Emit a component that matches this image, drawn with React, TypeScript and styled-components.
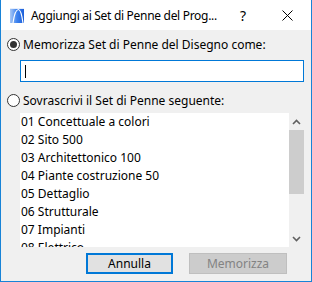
import React from "react";
import styled, { createGlobalStyle } from "styled-components";

const Global = createGlobalStyle`
  html, body { margin: 0; padding: 0; background: #f0f0f0; }
  * { box-sizing: border-box; }
`;

const FONT = `"Noto Sans", "Open Sans", sans-serif`;

const Window = styled.div`
  width: 312px;
  height: 282px;
  border: 1px solid #1883d7;
  border-top: none;
  display: flex;
  flex-direction: column;
  font-family: ${FONT};
  font-size: 12px;
  color: #000;
  overflow: hidden;
`;

const TitleBar = styled.div`
  height: 30px;
  flex: none;
  background: #fff;
  display: flex;
  align-items: center;
  padding-left: 9px;
`;

const TitleText = styled.span`
  margin-left: 7px;
  font-size: 12px;
  letter-spacing: -0.3px;
  color: #000;
  white-space: nowrap;
  flex: 1;
`;

const TitleButton = styled.div<{ $w: number }>`
  width: ${(p) => p.$w}px;
  height: 30px;
  display: flex;
  align-items: center;
  justify-content: center;
  font-size: 14px;
`;

const Body = styled.div`
  flex: 1;
  background: #f0f0f0;
  padding: 5px 7px 0 5px;
  display: flex;
  flex-direction: column;
`;

const RadioRow = styled.label`
  display: flex;
  align-items: center;
  height: 18px;
  gap: 3px;
  white-space: nowrap;
`;

const RadioCircle = styled.span<{ $checked?: boolean }>`
  width: 13px;
  height: 13px;
  border-radius: 50%;
  border: 1px solid #333;
  background: #fff;
  display: inline-flex;
  align-items: center;
  justify-content: center;
  flex: none;
  margin-left: 1px;
  &::after {
    content: "";
    width: 7px;
    height: 7px;
    border-radius: 50%;
    background: #333;
    display: ${(p) => (p.$checked ? "block" : "none")};
  }
`;

const Input = styled.div`
  margin: 7px 0 0 14px;
  height: 22px;
  border: 1px solid #0078d7;
  background: #fff;
  display: flex;
  align-items: center;
  padding-left: 4px;
`;

const Caret = styled.span`
  width: 1px;
  height: 13px;
  background: #000;
`;

const Spacer = styled.div<{ $h: number }>`
  height: ${(p) => p.$h}px;
  flex: none;
`;

const ListBox = styled.div`
  margin-left: 14px;
  height: 134px;
  display: flex;
  background: #fff;
  overflow: hidden;
`;

const ListItems = styled.div`
  flex: 1;
  overflow: hidden;
  padding-left: 1px;
`;

const ListItem = styled.div`
  height: 18px;
  line-height: 18px;
  white-space: nowrap;
`;

const ScrollBar = styled.div`
  width: 15px;
  background: #f0f0f0;
  display: flex;
  flex-direction: column;
  align-items: stretch;
`;

const ScrollArrow = styled.div`
  height: 17px;
  display: flex;
  align-items: center;
  justify-content: center;
`;

const Thumb = styled.div`
  height: 64px;
  background: #cdcdcd;
`;

const ScrollFill = styled.div`
  flex: 1;
`;

const Buttons = styled.div`
  display: flex;
  justify-content: flex-end;
  gap: 16px;
  margin-top: 6px;
  padding-right: 17px;
`;

const Button = styled.div<{ $default?: boolean; $disabled?: boolean }>`
  height: 21px;
  width: ${(p) => (p.$default ? 87 : 98)}px;
  display: flex;
  align-items: center;
  justify-content: center;
  background: ${(p) => (p.$disabled ? "#cccccc" : "#e1e1e1")};
  border: ${(p) =>
    p.$default ? "2px solid #0078d7" : p.$disabled ? "1px solid #bfbfbf" : "1px solid #adadad"};
  color: ${(p) => (p.$disabled ? "#838383" : "#000")};
`;

const items = [
  "01 Concettuale a colori",
  "02 Sito 500",
  "03 Architettonico 100",
  "04 Piante costruzione 50",
  "05 Dettaglio",
  "06 Strutturale",
  "07 Impianti",
  "08 Elettrico",
];

const AppIcon = () => (
  <svg width="14" height="15" viewBox="0 0 14 15">
    <defs>
      <linearGradient id="g" x1="0" y1="0" x2="1" y2="0">
        <stop offset="0" stopColor="#a9c8f5" />
        <stop offset="0.5" stopColor="#3c82ef" />
        <stop offset="1" stopColor="#1d5fd8" />
      </linearGradient>
    </defs>
    <rect x="0" y="0" width="14" height="15" fill="url(#g)" />
    <path d="M3 15 C4 8 6 1.5 8.5 1.5 C11 1.5 12 8 13 15" fill="none" stroke="#fff" strokeWidth="1.2" />
    <rect x="0" y="0" width="14" height="1" fill="#e6eefc" />
  </svg>
);

const Chevron = ({ up }: { up?: boolean }) => (
  <svg width="9" height="6" viewBox="0 0 9 6">
    <path
      d={up ? "M1 5 L4.5 1.5 L8 5" : "M1 1 L4.5 4.5 L8 1"}
      fill="none"
      stroke="#606060"
      strokeWidth="1.6"
    />
  </svg>
);

export default function App() {
  return (
    <>
      <Global />
      <Window>
        <TitleBar>
          <AppIcon />
          <TitleText>Aggiungi ai Set di Penne del Prog...</TitleText>
          <TitleButton $w={40}>?</TitleButton>
          <TitleButton $w={48}>
            <svg width="11" height="11" viewBox="0 0 11 11">
              <path d="M0.5 0.5 L10.5 10.5 M10.5 0.5 L0.5 10.5" stroke="#000" strokeWidth="1" />
            </svg>
          </TitleButton>
        </TitleBar>
        <Body>
          <RadioRow>
            <RadioCircle $checked />
            Memorizza Set di Penne del Disegno come:
          </RadioRow>
          <Input>
            <Caret />
          </Input>
          <Spacer $h={9} />
          <RadioRow>
            <RadioCircle />
            Sovrascrivi il Set di Penne seguente:
          </RadioRow>
          <Spacer $h={4} />
          <ListBox>
            <ListItems>
              {items.map((t) => (
                <ListItem key={t}>{t}</ListItem>
              ))}
            </ListItems>
            <ScrollBar>
              <ScrollArrow>
                <Chevron up />
              </ScrollArrow>
              <Thumb />
              <ScrollFill />
              <ScrollArrow>
                <Chevron />
              </ScrollArrow>
            </ScrollBar>
          </ListBox>
          <Buttons>
            <Button $default>Annulla</Button>
            <Button $disabled>Memorizza</Button>
          </Buttons>
        </Body>
      </Window>
    </>
  );
}
